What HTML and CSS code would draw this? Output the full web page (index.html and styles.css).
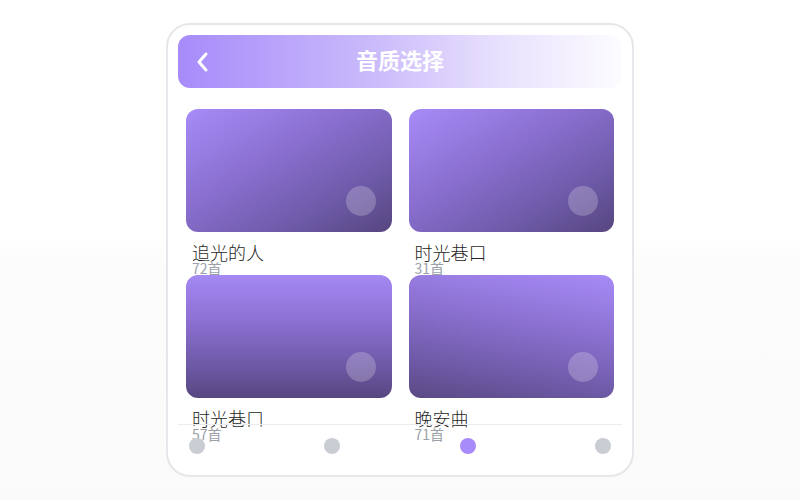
FILE: index.html
```html
<!DOCTYPE html>
<html>
  <head>
    <title>音质选择</title>
    <link rel="stylesheet" href="styles.css">
  </head>
  <body>
    <div class="phone">
      <div class="header">
        <!-- back arrow -->
        <svg class="back" width="14" height="22" viewBox="0 0 14 22">
          <path d="M10 3 L3 11 L10 19" fill="none" stroke="#fff" stroke-width="3" stroke-linecap="round" stroke-linejoin="round"/>
        </svg>
        <h1 class="title">音质选择</h1>
      </div>

      <div class="list">
        <div class="item">
          <div class="cover cover-diag"><span class="play"></span></div>
          <p class="name">追光的人</p>
          <p class="count">72首</p>
        </div>
        <div class="item">
          <div class="cover cover-diag"><span class="play"></span></div>
          <p class="name">时光巷口</p>
          <p class="count">31首</p>
        </div>
        <div class="item">
          <div class="cover cover-down"><span class="play"></span></div>
          <p class="name">时光巷口</p>
          <p class="count">57首</p>
        </div>
        <div class="item">
          <div class="cover cover-down-r"><span class="play"></span></div>
          <p class="name">晚安曲</p>
          <p class="count">71首</p>
        </div>
      </div>

      <!-- bottom nav dots -->
      <div class="nav">
        <span class="dot"></span>
        <span class="dot"></span>
        <span class="dot active"></span>
        <span class="dot"></span>
      </div>
    </div>
  </body>
</html>
```

FILE: styles.css
```css
html, body {
  height: 100%;
}
body {
  margin: 0;
  background: linear-gradient(to bottom, #fff 0, #fff 48%, #fcfcfc 52%, #fafafa 100%);
  font-family: "Noto Sans CJK SC", "Noto Sans", sans-serif;
  display: flex;
  justify-content: center;
  align-items: center;
}
.phone {
  width: 468px;
  height: 454px;
  box-sizing: border-box;
  border: 2px solid #e6e6eb;
  border-radius: 24px;
  background: #fff;
  padding: 10px;
  position: relative;
  overflow: hidden;
}

.header {
  height: 53px;
  border-radius: 12px;
  background: linear-gradient(90deg, #a78bfa 0%, #cbbcfb 45%, #e6defd 70%, #fdfcff 100%);
  display: flex;
  align-items: center;
  justify-content: center;
  position: relative;
}
.back {
  position: absolute;
  left: 18px;
  top: 16px;
}
.title {
  margin: 0 0 6px 0;
  color: #fff;
  font-size: 22px;
  font-weight: bold;
  line-height: 1;
}

.list {
  margin-top: 21px;
  padding: 0 8px;
  display: grid;
  grid-template-columns: 1fr 1fr;
  column-gap: 17px;
}
.cover {
  height: 123px;
  border-radius: 12px;
  position: relative;
}
.cover-diag {
  background: linear-gradient(150deg, #a78bf7 0%, #8a6fd0 40%, #6c59a6 75%, #56467f 100%);
}
.cover-down {
  background: linear-gradient(180deg, #a589f4 0%, #8a6ecf 40%, #6c58a4 75%, #574780 100%);
}
.cover-down-r {
  background: linear-gradient(190deg, #a78bf7 0%, #8b70d0 40%, #6e5aa7 75%, #5a4984 100%);
}
.play {
  position: absolute;
  right: 16px;
  bottom: 16px;
  width: 30px;
  height: 30px;
  border-radius: 50%;
  background: rgba(255, 255, 255, 0.22);
}
.name {
  margin: 10px 0 0 6px;
  font-size: 18px;
  font-weight: 300;
  line-height: 20px;
  color: #1f1f24;
}
.count {
  margin: 0 0 0 6px;
  font-size: 14px;
  line-height: 13px;
  color: #9ba1a9;
}

.nav {
  position: absolute;
  left: 10px;
  right: 10px;
  bottom: 8px;
  border-top: 1px solid #ececf0;
  padding: 13px 11px;
  display: flex;
  justify-content: space-between;
}
.dot {
  width: 16px;
  height: 16px;
  border-radius: 50%;
  background: #c9cdd3;
}
.dot.active {
  background: #a78bfa;
}
```
